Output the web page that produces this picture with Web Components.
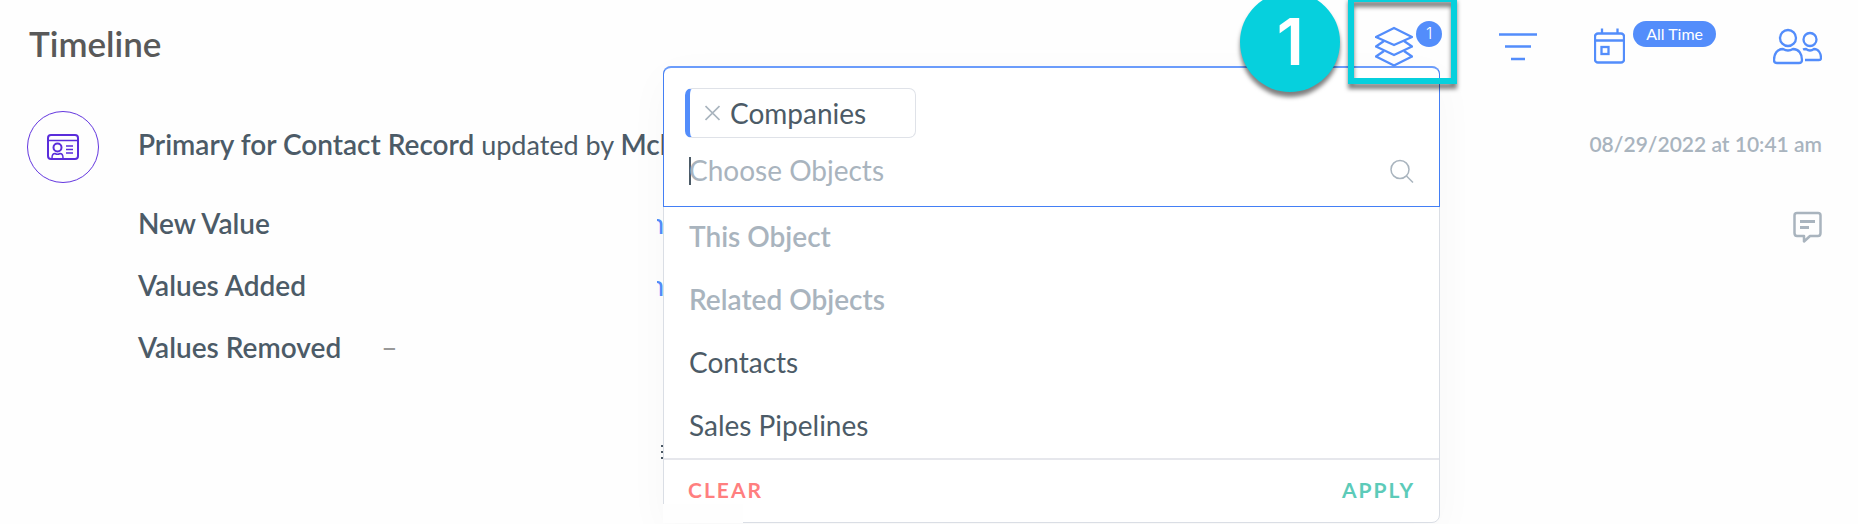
<!DOCTYPE html>
<html lang="en">
<head>
<meta charset="utf-8">
<title>Timeline</title>
<style>
html, body { margin: 0; background: #fefefe; }
body { font-family: Lato, "Open Sans", sans-serif; font-size: 28px; color: #4c5b67; }
</style>
</head>
<body>
<timeline-panel></timeline-panel>
<script>
function define(name, html) {
  const template = document.createElement("template");
  template.innerHTML = html;
  customElements.define(name, class extends HTMLElement {
    constructor() {
      super();
      this.attachShadow({ mode: "open" }).append(template.content.cloneNode(true));
    }
  });
}

define("tool-button", `
<style>
:host { display: block; }
button { display: flex; align-items: flex-start; gap: var(--gap, 0); height: 52px; padding: 0; border: 0; background: none; color: #538dfb; font: inherit; cursor: pointer; }
::slotted(svg) { margin-top: 6px; }
::slotted(span) { box-sizing: border-box; height: 26px; min-width: 26px; margin-top: 1px; padding: 0 13px; border-radius: 13px; background: #538dfb; color: #fff; font-size: 16px; line-height: 25px; text-align: center; }
::slotted(span.count) { padding: 0; font-family: Inter, sans-serif; font-weight: 300; }
</style>
<button type="button"><slot></slot></button>`);

define("timeline-header", `
<style>
:host { display: flex; align-items: center; height: 92px; padding: 0 36px 0 29px; }
h1 { flex: 1; margin: 0; font-size: 35px; line-height: 40px; font-weight: 600; color: #595959; padding-bottom: 6px; }
nav { display: flex; gap: 57px; position: relative; z-index: 3; }
.step { position: relative; }
.wide { --gap: 8px; }
.tight { --gap: 3px; }
svg { display: block; fill: none; stroke: #538dfb; stroke-width: 2.300; }
</style>
<h1>Timeline</h1>
<nav aria-label="Timeline tools">
  <div class="step">
    <tool-button class="tight"><svg width="38" height="42" viewBox="0 0 38 42" stroke-linejoin="round" aria-label="Objects"><path d="M19 2 37 11 19 19 1 11Z"/><path d="M9 15 1 20.500 19 29 37 20.500 29 15"/><path d="M9 25 1 30.500 19 39.500 37 30.500 29 25"/></svg><span class="count">1</span></tool-button>
    <step-callout>1</step-callout>
  </div>
  <tool-button><svg width="38" height="42" viewBox="0 0 38 42" aria-label="Filter"><path d="M0 8.500H38M6 20.500H32M12 33H26"/></svg></tool-button>
  <tool-button class="wide"><svg width="31" height="42" viewBox="0 0 31 42" aria-label="Date range"><rect x="1" y="7.500" width="29" height="29" rx="3"/><path d="M1 14.500H30M8 2.500V8M23.500 2.500V8"/><rect x="7.500" y="21" width="7" height="7"/></svg><span>All Time</span></tool-button>
  <tool-button><svg width="49" height="42" viewBox="0 0 49 42" stroke-linejoin="round" aria-label="Users"><circle cx="15" cy="12" r="8"/><path d="M10 23C4 23 1 28 1 34Q1 37 4 37H26Q29 37 29 34C29 28 26 23 20 23Q15 26 10 23Z"/><circle cx="37" cy="13.500" r="6.500"/><path d="M30 23.500Q31 23 33 23Q37 26 41 23C46 23 48 28 48 32Q48 34 46 34H32"/></svg></tool-button>
</nav>`);

define("step-callout", `
<style>
:host { position: absolute; inset: -24px -15px -12px -27px; border: 6px solid #06d0dd; pointer-events: none; filter: drop-shadow(0 5px 2px rgba(0,0,0,.5)); }
span { position: absolute; right: calc(100% + 14px); top: -10px; width: 100px; height: 100px; border-radius: 50%; background: #06d0dd; color: #fff; font: 600 64px/100px Inter, sans-serif; text-align: center; }
</style>
<span><slot></slot></span>`);

define("value-row", `
<style>
:host { display: flex; align-items: center; height: 62px; }
dt { font-weight: 600; }
dd { margin: 0 0 0 40px; color: #999; }
:host([hidden-start]) dd { display: flex; justify-content: flex-end; width: 7px; margin-left: auto; overflow: hidden; }
::slotted(a) { color: #538dfb; text-decoration: none; }
</style>
<dt><slot name="label"></slot></dt><dd><slot></slot></dd>`);

define("timeline-entry", `
<style>
:host { display: grid; grid-template-columns: 72px 1fr auto; column-gap: 39px; padding: 19px 36px 0 27px; line-height: 32px; }
.avatar { box-sizing: border-box; width: 72px; height: 72px; border: 1px solid #6437df; border-radius: 50%; display: grid; place-items: center; }
svg { display: block; fill: none; }
.body { min-width: 0; }
.title { margin: 0 0 15px; height: 66px; font-size: 27px; line-height: 66px; white-space: nowrap; }
b { font-size: 28px; font-weight: 600; }
.side { display: flex; flex-direction: column; align-items: flex-end; gap: 34px; }
time { line-height: 66px; font-size: 21px; font-weight: 600; color: #a9b4be; }
dl { margin: 0; max-width: 526px; }
button { padding: 0; border: 0; background: none; }
</style>
<div class="avatar"><svg width="32" height="26" viewBox="0 0 32 26" stroke="#5a2ddb" stroke-width="2" aria-hidden="true"><rect x="1" y="1" width="30" height="24" rx="3"/><path d="M1 6.500H31" stroke-width="1.500"/><circle cx="10.500" cy="13.500" r="4"/><path d="M5 24Q5 19.500 8 19.500Q10.500 21 13 19.500Q16 19.500 16 24M19 12H26M19 15.500H26M19 19H26" stroke-width="1.500"/></svg></div>
<div class="body">
  <p class="title"><b>Primary for Contact Record</b> updated by <b>Mcl</b></p>
  <dl>
    <value-row hidden-start><span slot="label">New Value</span><a href="#">n</a></value-row>
    <value-row hidden-start><span slot="label">Values Added</span><a href="#">n</a></value-row>
    <value-row><span slot="label">Values Removed</span>–</value-row>
  </dl>
</div>
<div class="side">
  <time datetime="2022-08-29T10:41">08/29/2022 at 10:41 am</time>
  <button type="button" aria-label="Comment"><svg width="29" height="32" viewBox="0 0 29 32" stroke="#a9b4be" stroke-width="2.500" stroke-linejoin="round"><path d="M4 2H25Q27.500 2 27.500 4.500V22Q27.500 25 25 25H17L11 30.500V25H4Q1.500 25 1.500 22V4.500Q1.500 2 4 2Z"/><path d="M7 10.500H22M7 16.500H16" stroke-width="3"/></svg></button>
</div>`);

define("object-chip", `
<style>
:host { display: flex; box-sizing: border-box; align-items: center; width: 231px; height: 50px; padding-left: 15px; border: 1px solid #dfe2e8; border-left: 5px solid #538dfb; border-radius: 7px; color: #4c5b67; }
button { padding: 0; border: 0; background: none; margin-right: 10px; }
svg { display: block; }
</style>
<button type="button" aria-label="Remove"><svg width="15" height="16" viewBox="0 0 15 16" stroke="#a9b4be" stroke-width="1.700"><path d="M.5 1 14.500 15M14.500 1 .5 15"/></svg></button><slot></slot>`);

define("object-option", `
<style>
:host { display: block; height: 63px; line-height: 61px; padding: 0 25px; }
:host([group]) { font-weight: 600; color: #a9b4be; }
</style><slot></slot>`);

define("object-picker", `
<style>
:host { display: block; box-sizing: border-box; background: #fff; border: 1px solid #dadee5; border-radius: 8px; box-shadow: 0 12px 44px rgba(0,0,0,.03); }
.field { box-sizing: border-box; height: 141px; margin: -1px -1px; border: 1px solid #437ff5; border-top: 2px solid #6b9cfb; border-radius: 8px 8px 0 0; padding: 20px 25px 0 21px; }
.search { display: flex; align-items: center; padding-left: 4px; margin-top: 13px; }
input { flex: 1; min-width: 0; padding: 0 0 2px; border: 0; outline: 0; background: none; font: inherit; line-height: 38px; height: 38px; color: #4c5b67; }
input::placeholder { color: #a9b4be; opacity: 1; }
.caret { width: 2px; height: 28px; margin-right: -2px; background: #4c5b67; }
svg { display: block; }
footer { display: flex; justify-content: space-between; align-items: center; box-sizing: border-box; height: 64px; padding: 0 24px 2px; border-top: 2px solid #e6e7ec; }
footer button { padding: 0; border: 0; background: none; font: inherit; font-size: 21px; line-height: 24px; font-weight: 700; letter-spacing: 2px; }
.clear { color: #ff7f7f; }
.apply { color: #5ccbb9; }
/* the panel's lower left corner fades into the page */
.corner { position: absolute; left: -1px; bottom: -1px; width: 80px; height: 19px; background: #fefefe; }
</style>
<div class="field">
  <object-chip>Companies</object-chip>
  <label class="search"><span class="caret"></span><input type="text" placeholder="Choose Objects" aria-label="Choose Objects"><svg width="24" height="24" viewBox="0 0 24 24" fill="none" stroke="#a9b4be" stroke-width="1.500"><circle cx="10" cy="10.500" r="9"/><path d="M16.500 17 23 23.500"/></svg></label>
</div>
<div>
  <object-option group>This Object</object-option>
  <object-option group>Related Objects</object-option>
  <object-option>Contacts</object-option>
  <object-option>Sales Pipelines</object-option>
</div>
<footer><button type="button" class="clear">CLEAR</button><button type="button" class="apply">APPLY</button></footer>
<div class="corner"></div>`);

define("timeline-panel", `
<style>
:host { display: block; position: relative; min-height: 100vh; overflow: hidden; }
object-picker { position: absolute; z-index: 2; top: 66px; right: 418px; width: 777px; }
.more { position: absolute; top: 445px; right: 1193px; display: block; }
</style>
<timeline-header></timeline-header>
<timeline-entry></timeline-entry>
<svg class="more" width="4" height="15" viewBox="0 0 4 15" fill="#4c5b67" aria-hidden="true"><path d="M0 0H4V2H0ZM0 6H4V8H0ZM0 12H4V14H0Z"/></svg>
<object-picker></object-picker>`);
</script>
</body>
</html>
